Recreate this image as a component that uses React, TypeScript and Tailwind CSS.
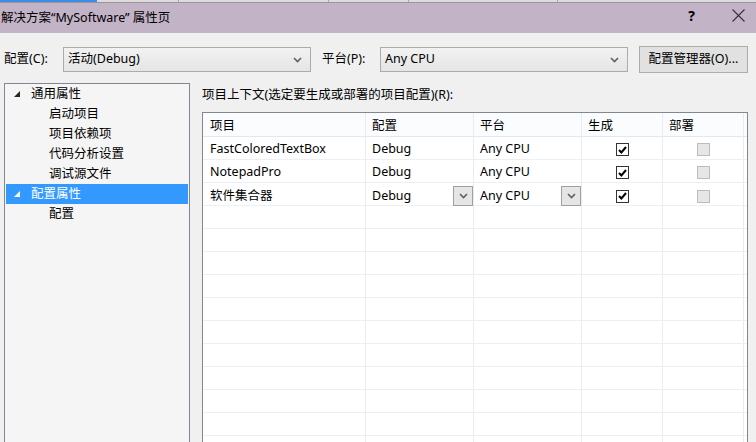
import React from 'react';

const font = { fontFamily: '"Noto Sans", "Noto Sans CJK SC", sans-serif' };

function Chevron({ className = '' }: { className?: string }) {
  return (
    <svg width="9" height="6" viewBox="0 0 9 6" className={className}>
      <path d="M1 1 L4.5 4.5 L8 1" fill="none" stroke="#606060" strokeWidth="1.6" />
    </svg>
  );
}

function Select({ value, className = '' }: { value: string; className?: string }) {
  return (
    <div className={`h-[25px] border border-[#acacac] bg-gradient-to-b from-[#f2f2f2] to-[#e5e5e5] flex items-center pl-[4px] pr-[8px] ${className}`}>
      <span className="flex-1 text-[12.5px] text-black leading-none">{value}</span>
      <Chevron />
    </div>
  );
}

function Tri({ white = false }: { white?: boolean }) {
  return (
    <svg width="7" height="7" viewBox="0 0 7 7" className="shrink-0">
      <polygon points="6,0 6,6 0,6" fill={white ? '#ffffff' : '#262626'} />
    </svg>
  );
}

function Check({ on, disabled }: { on?: boolean; disabled?: boolean }) {
  if (disabled) {
    return <div className="w-[13px] h-[13px] border border-[#bcbcbc] bg-[#e6e6e6]" />;
  }
  return (
    <div className="w-[13px] h-[13px] border border-[#333333] bg-white flex items-center justify-center">
      {on && (
        <svg width="9" height="8" viewBox="0 0 9 8">
          <path d="M1 4 L3.4 6.5 L8 1" fill="none" stroke="#000" strokeWidth="2" />
        </svg>
      )}
    </div>
  );
}

function DropBtn() {
  return (
    <div className="w-[20px] h-[20px] border border-[#a0a0a0] bg-[#e5e5e5] flex items-center justify-center self-end">
      <Chevron />
    </div>
  );
}

const cols = 'grid grid-cols-[163px_108px_108px_81px_81px_1fr]';
const cell = 'border-r border-[#e8ecf1] h-full flex items-center pt-[3px]';

const rows = [
  { name: 'FastColoredTextBox', drop: false },
  { name: 'NotepadPro', drop: false },
  { name: '软件集合器', drop: true },
];

export default function App() {
  const tree = [
    { label: '通用属性', level: 1, open: true },
    { label: '启动项目', level: 2 },
    { label: '项目依赖项', level: 2 },
    { label: '代码分析设置', level: 2 },
    { label: '调试源文件', level: 2 },
    { label: '配置属性', level: 1, open: true, sel: true },
    { label: '配置', level: 2 },
  ];

  return (
    <div className="w-[756px] h-[442px] overflow-hidden bg-[#f0f0f0] flex flex-col text-black" style={font}>
      {/* top tab strip */}
      <div className="h-[2px] flex bg-[#dcdcdc] shrink-0">
        <div className="w-[97px] bg-[#3a8ee6]" />
        <div className="w-[81px]" />
        <div className="w-px bg-[#a8a8a8]" />
        <div className="w-[149px]" />
        <div className="w-px bg-[#a8a8a8]" />
        <div className="w-[79px]" />
        <div className="w-px bg-[#a8a8a8]" />
        <div className="w-[148px]" />
        <div className="w-px bg-[#a8a8a8]" />
        <div className="flex-1" />
      </div>
      <div className="h-px bg-[#9e94a0] shrink-0" />
      {/* title bar */}
      <div className="h-[30px] bg-[#c3b3c6] flex items-center shrink-0">
        <span className="pl-px text-[12.5px] leading-none">解决方案“MySoftware” 属性页</span>
        <div className="flex-1" />
        <span className="text-[14px] font-bold leading-none mr-[37px] mb-[5px]">?</span>
        <svg width="13" height="13" viewBox="0 0 13 13" className="mr-[11px] mb-[5px]">
          <path d="M0.5 0.5 L12.5 12.5 M12.5 0.5 L0.5 12.5" stroke="#333" strokeWidth="1.1" />
        </svg>
      </div>

      {/* config row */}
      <div className="flex items-center pt-[13px] pl-[4px] pr-[8px] shrink-0">
        <span className="w-[59px] text-[12.5px] leading-none">配置(C):</span>
        <Select value="活动(Debug)" className="w-[248px]" />
        <span className="ml-[11px] w-[58px] text-[12.5px] leading-none">平台(P):</span>
        <Select value="Any CPU" className="w-[248px]" />
        <div className="ml-[11px] w-[109px] h-[27px] border border-[#adadad] bg-[#e1e1e1] flex items-center justify-center text-[12.5px] leading-none">
          配置管理器(O)...
        </div>
      </div>

      {/* body */}
      <div className="flex flex-1 pt-[10px] pl-[4px] min-h-0">
        <div className="w-[186px] border border-[#828790] border-b-0 bg-[#f5f5f5] px-px">
          {tree.map((t) => (
            <div
              key={t.label}
              className={`h-[20px] flex items-center pt-px text-[12.5px] leading-none ${t.sel ? 'bg-[#3399ff] text-white' : ''}`}
            >
              {t.level === 1 ? (
                <>
                  <span className="w-[8px]" />
                  <Tri white={t.sel} />
                  <span className="ml-[10px]">{t.label}</span>
                </>
              ) : (
                <span className="ml-[43px]">{t.label}</span>
              )}
            </div>
          ))}
        </div>

        <div className="flex-1 flex flex-col pl-[12px] pr-[8px] min-h-0">
          <div className="h-[29px] pt-[5px] text-[12.5px] leading-[13px] shrink-0">项目上下文(选定要生成或部署的项目配置)(R):</div>
          <div className="flex-1 border border-[#828790] border-b-0 bg-white overflow-hidden">
            <div className={`${cols} h-[24px] bg-[#fbfcfe] border-b border-[#e3e8f0] text-[12.5px]`}>
              <div className={`${cell} pl-[7px] border-[#e3e8f0]`}>项目</div>
              <div className={`${cell} pl-[6px] border-[#e3e8f0]`}>配置</div>
              <div className={`${cell} pl-[6px] border-[#e3e8f0]`}>平台</div>
              <div className={`${cell} pl-[6px] border-[#e3e8f0]`}>生成</div>
              <div className={`${cell} pl-[6px] border-[#e3e8f0]`}>部署</div>
              <div />
            </div>
            {rows.map((r) => (
              <div key={r.name} className={`${cols} h-[23px] border-b border-[#eceff3] text-[12.5px]`}>
                <div className={`${cell} pl-[7px]`}>{r.name}</div>
                <div className={`${cell} pl-[6px]`}>
                  <span className="flex-1">Debug</span>
                  {r.drop && <DropBtn />}
                </div>
                <div className={`${cell} pl-[6px]`}>
                  <span className="flex-1">Any CPU</span>
                  {r.drop && <DropBtn />}
                </div>
                <div className={`${cell} justify-center`}>
                  <Check on />
                </div>
                <div className={`${cell} justify-center`}>
                  <Check disabled />
                </div>
                <div />
              </div>
            ))}
            {Array.from({ length: 11 }).map((_, i) => (
              <div key={i} className={`${cols} h-[23px] border-b border-[#eceff3]`}>
                <div className={cell} />
                <div className={cell} />
                <div className={cell} />
                <div className={cell} />
                <div className={cell} />
                <div />
              </div>
            ))}
          </div>
        </div>
      </div>
    </div>
  );
}
